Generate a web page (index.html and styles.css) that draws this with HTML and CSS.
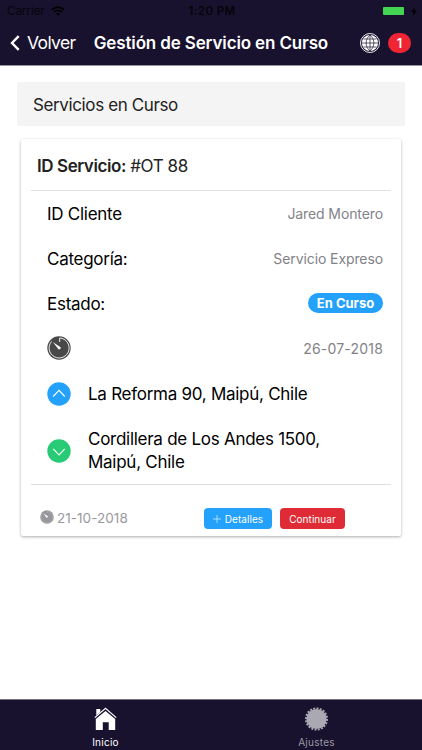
FILE: index.html
```html
<!DOCTYPE html>
<html lang="es">
<head>
    <meta charset="UTF-8">
    <meta name="viewport" content="width=device-width, initial-scale=1.0">
    <title>Gestión de Servicio en Curso</title>
    <link rel="stylesheet" href="styles.css">
</head>
<body>
    <header class="header">
        <div class="status">
            <div class="carrier">
                <span>Carrier</span>
                <svg width="14" height="10" viewBox="0 0 14 10" fill="none" stroke="#000" stroke-width="1.8">
                    <path d="M1 3.7Q7-1.5 13 3.7M3.2 6Q7 2.8 10.8 6"/>
                    <path d="M7 9.8L4.9 7.5Q7 6 9.1 7.5Z" fill="#000" stroke="none"/>
                </svg>
            </div>
            <span class="clock">1:20 PM</span>
            <div class="power">
                <div class="battery"></div>
                <svg width="6" height="9" viewBox="0 0 6 9"><path d="M4 0L0 5h2.5L1.8 9 6 3.7H3.4z" fill="#000"/></svg>
            </div>
        </div>
        <nav class="navbar">
            <a class="back">
                <svg width="10" height="16" viewBox="0 0 10 16"><path d="M8.7 1.2L2 8l6.7 6.8" fill="none" stroke="#fff" stroke-width="2.4"/></svg>
                <span>Volver</span>
            </a>
            <h1 class="title">Gestión de Servicio en Curso</h1>
            <svg width="20" height="20" viewBox="0 0 20 20" fill="none" stroke="#fff">
                <circle cx="10" cy="10" r="9.5" stroke-width=".9"/>
                <circle cx="10" cy="10" r="8.1" fill="#fff" stroke="none"/>
                <path d="M10 2v16M2 10h16M3.6 6h12.8M3.6 14h12.8M10 2C4.8 6.5 4.8 13.5 10 18M10 2c5.2 4.5 5.2 11.5 0 16" stroke="#18122e" stroke-width=".7"/>
            </svg>
            <span class="count">1</span>
        </nav>
    </header>

    <main class="content">
        <h2 class="section-title">Servicios en Curso</h2>
        <div class="card">
            <div class="card-head"><b>ID Servicio:</b> #OT 88</div>
            <div class="card-body">
                <div class="row">
                    <span class="label">ID Cliente</span>
                    <span class="note">Jared Montero</span>
                </div>
                <div class="row">
                    <span class="label">Categoría:</span>
                    <span class="note">Servicio Expreso</span>
                </div>
                <div class="row">
                    <span class="label">Estado:</span>
                    <span class="badge">En Curso</span>
                </div>
                <div class="row">
                    <svg class="timer" width="24" height="24" viewBox="0 0 24 24">
                        <circle cx="12" cy="12" r="11.7" fill="#484848"/>
                        <path d="M12.7 6V2A10 10 0 1 1 4.5 5.5" fill="none" stroke="#fff" stroke-width=".9"/>
                        <path d="M5.8 6L13.5 11.3 11.5 13.2Z" fill="#fff"/>
                        <circle cx="12.3" cy="12.1" r="1.3" fill="#fff"/>
                    </svg>
                    <span class="note date">26-07-2018</span>
                </div>
                <div class="place">
                    <svg width="24" height="24" viewBox="0 0 24 24">
                        <circle cx="12" cy="12" r="11.7" fill="#23a1fb"/>
                        <path d="M6.2 14.5L12 8.3l5.8 6.2" fill="none" stroke="#fff" stroke-width="1.1"/>
                    </svg>
                    <span>La Reforma 90, Maipú, Chile</span>
                </div>
                <div class="place tall">
                    <svg width="24" height="24" viewBox="0 0 24 24">
                        <circle cx="12" cy="12" r="11.7" fill="#27cb76"/>
                        <path d="M6.2 9.8L12 16l5.8-6.2" fill="none" stroke="#fff" stroke-width="1.1"/>
                    </svg>
                    <span>Cordillera de Los Andes 1500,<br>Maipú, Chile</span>
                </div>
            </div>
            <div class="card-foot">
                <svg class="small-timer" width="14" height="14" viewBox="0 0 24 24">
                    <circle cx="12" cy="12" r="11.7" fill="#96969b"/>
                    <path d="M12.7 5.4V2.2A9.9 9.9 0 1 1 4.5 5.5" fill="none" stroke="#b4b4b8" stroke-width="1"/>
                    <path d="M6 6.2L14 11 11.5 13.5Z" fill="#fff"/>
                </svg>
                <span class="foot-date">21-10-2018</span>
                <button class="btn details">
                    <svg width="8" height="8" viewBox="0 0 8 8"><path d="M4 0v8M0 4h8" stroke="#fff" stroke-width=".6"/></svg>
                    <span>Detalles</span>
                </button>
                <button class="btn next">Continuar</button>
            </div>
        </div>
    </main>

    <footer class="tabs">
        <a class="tab active">
            <svg width="24" height="24" viewBox="0 0 24 24" fill="#fff">
                <path d="M2.3 2h4v3L2.3 8.4z"/>
                <path d="M.8 10.6L11.5 1.4l10.7 9.2" fill="none" stroke="#fff" stroke-width="1.2"/>
                <path d="M1.8 12l9.7-8.1 9.7 8.1V23h-6.5v-7.7H8.8V23h-7z"/>
            </svg>
            <span>Inicio</span>
        </a>
        <a class="tab">
            <svg width="24" height="24" viewBox="0 0 24 24">
                <circle cx="11.5" cy="12" r="10.1" fill="#aaa8b2"/>
                <circle cx="11.5" cy="12" r="10.6" fill="none" stroke="#aaa8b2" stroke-width="2" pathLength="40" stroke-dasharray="1.2 .8"/>
            </svg>
            <span>Ajustes</span>
        </a>
    </footer>
</body>
</html>
```

FILE: styles.css
```css
*{
    box-sizing: border-box;
}
body{
    margin: 0;
    height: 750px;
    display: flex;
    flex-direction: column;
    background-color: #fff;
    color: #000;
    font-family: Inter, "Liberation Sans", sans-serif;
    overflow: hidden;
    white-space: nowrap;
}
svg{
    display: block;
    flex: none;
}
.header{
    height: 66px;
    background-color: #18122e;
    border-bottom: 1px solid #98959f;
}
.status{
    height: 21px;
    display: grid;
    grid-template-columns: 1fr auto 1fr;
    align-items: center;
    padding: 1px 5px 0 7px;
    font-size: 11.5px;
    color: #05040a;
}
.carrier{
    display: flex;
    align-items: center;
    gap: 6px;
}
.clock{
    font-weight: 600;
    letter-spacing: 0.4px;
}
.power{
    display: flex;
    align-items: center;
    justify-content: flex-end;
    gap: 7px;
}
.battery{
    width: 21px;
    height: 8px;
    border-radius: 1px;
    background-color: #43d551;
}
.navbar{
    height: 44px;
    display: flex;
    align-items: center;
    padding: 0 11px 0 10px;
    color: #fff;
}
.back{
    display: flex;
    align-items: center;
    gap: 7px;
    width: 84px;
    font-size: 17.5px;
    line-height: 20px;
    letter-spacing: -0.65px;
}
.title{
    margin: 0;
    width: 267px;
    font-size: 17px;
    font-weight: 600;
    letter-spacing: -0.14px;
}
.count{
    margin-left: 8px;
    width: 23px;
    height: 20px;
    border-radius: 10px;
    background-color: #ef2533;
    font-size: 13px;
    font-weight: 600;
    line-height: 20px;
    text-align: center;
}
.content{
    flex: 1;
    padding: 16px 17px 0;
}
.section-title{
    margin: 0 0 13px;
    height: 44px;
    padding-left: 16px;
    background-color: #f4f4f4;
    color: #222;
    font-size: 17px;
    font-weight: 400;
    line-height: 46px;
    letter-spacing: -0.38px;
}
.card{
    margin: 0 4px;
    height: 397px;
    border-radius: 2px;
    box-shadow: 0 1px 3px rgba(0,0,0,.32);
    display: flex;
    flex-direction: column;
    padding: 0 10px;
}
.card-head{
    height: 52px;
    padding-left: 6px;
    border-bottom: 1px solid #e2e2e2;
    color: #222;
    font-size: 17px;
    line-height: 55px;
    letter-spacing: -0.42px;
}
.card-head b{
    font-weight: 600;
}
.card-body{
    height: 294px;
    padding: 0 8px 0 16px;
    border-bottom: 1px solid #dedede;
}
.row{
    height: 45px;
    display: flex;
    align-items: center;
    justify-content: space-between;
}
.label{
    font-size: 17px;
    line-height: 22px;
    letter-spacing: -0.27px;
}
.note{
    color: #828288;
    font-size: 14px;
    letter-spacing: -0.1px;
}
.date{
    letter-spacing: 0.2px;
}
.timer{
    margin-bottom: 2px;
}
.badge{
    width: 75px;
    height: 20px;
    margin-bottom: 2px;
    border-radius: 10px;
    background-color: #23a1fb;
    color: #fff;
    font-size: 13px;
    font-weight: 700;
    line-height: 20px;
    text-align: center;
}
.place{
    height: 46px;
    display: flex;
    align-items: center;
    gap: 17px;
    font-size: 17px;
    line-height: 23px;
    letter-spacing: -0.27px;
}
.tall{
    height: 67px;
}
.card-foot{
    flex: 1;
    display: flex;
    align-items: center;
    padding: 16px 0 0 9px;
}
.small-timer{
    margin-top: -3px;
}
.foot-date{
    margin-left: 3px;
    margin-top: -1px;
    width: 147px;
    color: #99999e;
    font-size: 13.5px;
    letter-spacing: 0.05px;
}
.btn{
    height: 21px;
    padding: 0;
    border: 0;
    border-radius: 4px;
    color: #fff;
    font-family: inherit;
    font-size: 10px;
    letter-spacing: 0.05px;
    display: flex;
    align-items: center;
    justify-content: center;
    gap: 4px;
}
.details{
    width: 68px;
    margin-right: 8px;
    background-color: #23a1fb;
}
.next{
    width: 65px;
    background-color: #df2b35;
}
.tabs{
    height: 51px;
    display: flex;
    background-color: #18122e;
    border-top: 1px solid #77737f;
}
.tab{
    flex: 1;
    display: flex;
    flex-direction: column;
    align-items: center;
    padding-top: 7px;
    color: #9c99a6;
    font-size: 10px;
    line-height: 14px;
    letter-spacing: 0.25px;
    gap: 4px;
}
.active{
    color: #fff;
}
```
